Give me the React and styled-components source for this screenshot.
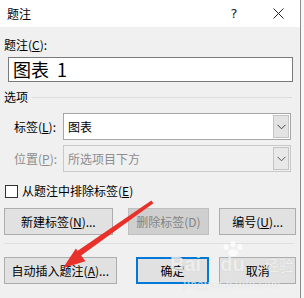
import React from "react";
import styled, { createGlobalStyle } from "styled-components";

const Global = createGlobalStyle`
  html, body { margin: 0; padding: 0; }
  body {
    width: 304px; height: 298px; overflow: hidden;
    background: #f7f7f7;
    font-family: "Noto Sans CJK SC", "Microsoft YaHei", sans-serif;
    font-size: 12px; color: #000;
  }
`;

const Page = styled.div`
  position: relative;
  width: 304px; height: 298px;
  display: flex;
`;

const Dialog = styled.div`
  width: 300px; height: 298px;
  border-right: 1px solid #8c8c8c;
  background: #f0f0f0;
  display: flex; flex-direction: column;
`;

const TitleBar = styled.div`
  height: 27px; flex: none;
  background: #fff;
  display: flex; align-items: center;
  padding-left: 7px;
  font-size: 12px;
`;

const Title = styled.div`
  flex: 1;
`;

const TitleBtn = styled.div`
  width: 44px; height: 27px;
  display: flex; align-items: center; justify-content: center;
  font-family: "DejaVu Sans", sans-serif;
  font-size: 13px;
  color: #222;
`;

const Body = styled.div`
  flex: 1;
  display: flex; flex-direction: column;
  padding: 0 4px;
`;

const FieldLabel = styled.div`
  margin-top: 10px;
  line-height: 16px;
  height: 16px;
`;

const U = styled.span`
  text-decoration: underline;
  text-underline-offset: 1px;
`;

const TextBox = styled.div`
  margin: 4px 0 0 4px;
  width: 279px; height: 23px;
  border: 1px solid #7a7a7a;
  background: #fff;
  display: flex; align-items: center;
  padding-left: 4px;
  font-size: 18px;
  line-height: 23px;
`;

const GroupHeader = styled.div`
  margin-top: 8px;
  display: flex; align-items: center; gap: 4px;
  line-height: 14px;
  height: 14px;
  &::after {
    content: "";
    flex: 1;
    height: 1px;
    background: #dcdcdc;
    margin-right: 4px;
  }
`;

const FieldRow = styled.div`
  margin-top: ${(p) => p.$mt}px;
  display: flex; align-items: center;
  padding-left: 10px;
  color: ${(p) => (p.$disabled ? "#8d8d8d" : "#000")};
`;

const RowLabel = styled.div`
  width: 49px;
`;

const Select = styled.div`
  width: 226px; height: 25px;
  border: 1px solid ${(p) => (p.$disabled ? "#c8c8c8" : "#a6a6a6")};
  background: ${(p) => (p.$disabled ? "#f0f0f0" : "#fff")};
  display: flex; align-items: stretch;
`;

const SelectText = styled.div`
  flex: 1;
  padding-left: 4px;
  display: flex; align-items: center;
`;

const DropBtn = styled.div`
  width: 14px;
  margin: 1px;
  background: ${(p) => (p.$disabled ? "#e8e8e8" : "#e3e3e3")};
  border: 1px solid #c4c4c4;
  display: flex; align-items: center; justify-content: center;
`;

const CheckRow = styled.label`
  margin-top: 12px;
  display: flex; align-items: center; gap: 4px;
  line-height: 14px;
  padding-left: 1px;
`;

const Box = styled.span`
  width: 11px; height: 11px;
  border: 1px solid #333;
  background: #fff;
`;

const ButtonRow = styled.div`
  margin-top: ${(p) => p.$mt}px;
  display: flex; align-items: center;
`;

const Button = styled.div`
  width: ${(p) => p.$w}px;
  height: 27px;
  box-sizing: border-box;
  margin-left: ${(p) => p.$ml || 0}px;
  background: ${(p) => (p.$disabled ? "#cfcfcf" : "#e1e1e1")};
  border: ${(p) => (p.$default ? "2px solid #0078d7" : p.$disabled ? "1px solid #bfbfbf" : "1px solid #adadad")};
  color: ${(p) => (p.$disabled ? "#838383" : "#000")};
  display: flex; align-items: center; justify-content: center;
  white-space: nowrap;
`;

const Separator = styled.div`
  margin-top: 8px;
  height: 1px;
  background: #dfdfdf;
  margin-right: 2px;
`;

const Overlay = styled.svg`
  position: absolute;
  left: 0; top: 0;
  pointer-events: none;
`;

const Watermark = styled.div`
  position: absolute;
  left: 170px; top: 254px;
  width: 124px;
  display: flex; flex-direction: column;
  color: rgba(255, 255, 255, 0.7);
  text-shadow: 0 0 1px rgba(140, 140, 140, 0.3);
  pointer-events: none;
`;

const WmMain = styled.div`
  display: flex; justify-content: space-between; align-items: baseline;
  font-family: "Liberation Sans", sans-serif;
  font-weight: bold;
  font-size: 20px;
  line-height: 20px;
`;

const WmCjk = styled.span`
  font-family: "Noto Sans CJK SC", sans-serif;
  font-weight: normal;
  font-size: 15px;
`;

const WmSub = styled.div`
  font-family: "Liberation Serif", serif;
  font-size: 12px;
  line-height: 12px;
  margin-top: 3px;
  letter-spacing: 0.5px;
  text-align: center;
`;

const Chevron = ({ color }) => (
  <svg width="9" height="6" viewBox="0 0 9 6">
    <path d="M0.5 0.8 L4.5 4.8 L8.5 0.8" fill="none" stroke={color} strokeWidth="1" />
  </svg>
);

const CloseIcon = () => (
  <svg width="11" height="11" viewBox="0 0 11 11">
    <path d="M0.5 0.5 L10.5 10.5 M10.5 0.5 L0.5 10.5" stroke="#222" strokeWidth="1" fill="none" />
  </svg>
);

export default function App() {
  return (
    <Page>
      <Global />
      <Dialog>
        <TitleBar>
          <Title>题注</Title>
          <TitleBtn>?</TitleBtn>
          <TitleBtn>
            <CloseIcon />
          </TitleBtn>
        </TitleBar>
        <Body>
          <FieldLabel>
            题注(<U>C</U>):
          </FieldLabel>
          <TextBox>图表&nbsp;&nbsp;1</TextBox>
          <GroupHeader>选项</GroupHeader>
          <FieldRow $mt={9}>
            <RowLabel>
              标签(<U>L</U>):
            </RowLabel>
            <Select>
              <SelectText>图表</SelectText>
              <DropBtn>
                <Chevron color="#444" />
              </DropBtn>
            </Select>
          </FieldRow>
          <FieldRow $mt={5} $disabled>
            <RowLabel>
              位置(<U>P</U>):
            </RowLabel>
            <Select $disabled>
              <SelectText>所选项目下方</SelectText>
              <DropBtn $disabled>
                <Chevron color="#555" />
              </DropBtn>
            </Select>
          </FieldRow>
          <CheckRow>
            <Box />
            <span>
              从题注中排除标签(<U>E</U>)
            </span>
          </CheckRow>
          <ButtonRow $mt={10}>
            <Button $w={109}>
              新建标签(<U>N</U>)...
            </Button>
            <Button $w={82} $ml={15} $disabled>
              删除标签(D)
            </Button>
            <Button $w={77} $ml={10}>
              编号(<U>U</U>)...
            </Button>
          </ButtonRow>
          <Separator />
          <ButtonRow $mt={13}>
            <Button $w={113}>
              自动插入题注(<U>A</U>)...
            </Button>
            <Button $w={74} $ml={19} $default>
              确定
            </Button>
            <Button $w={77} $ml={10}>
              取消
            </Button>
          </ButtonRow>
        </Body>
      </Dialog>
      <Watermark>
        <WmMain>
          <span>Bai</span>
          <span>du</span>
          <WmCjk>经验</WmCjk>
        </WmMain>
        <WmSub>jingyan.baidu.com</WmSub>
      </Watermark>
      <Overlay width="304" height="298" viewBox="0 0 304 298">
        <g fill="rgba(255,255,255,0.7)">
          <ellipse cx="226" cy="247" rx="2.5" ry="3" />
          <ellipse cx="233" cy="244" rx="2.5" ry="3" />
          <ellipse cx="240" cy="247" rx="2.5" ry="3" />
          <ellipse cx="233" cy="253" rx="5" ry="3.5" />
        </g>
        <path
          d="M151.4 200.6 L153.4 203.2 L79.8 256.6 L76.2 251.8 Z"
          fill="#e8312a"
        />
        <path d="M63 268 L85.5 261.3 L75.9 248.5 Z" fill="#e8312a" />
      </Overlay>
    </Page>
  );
}
